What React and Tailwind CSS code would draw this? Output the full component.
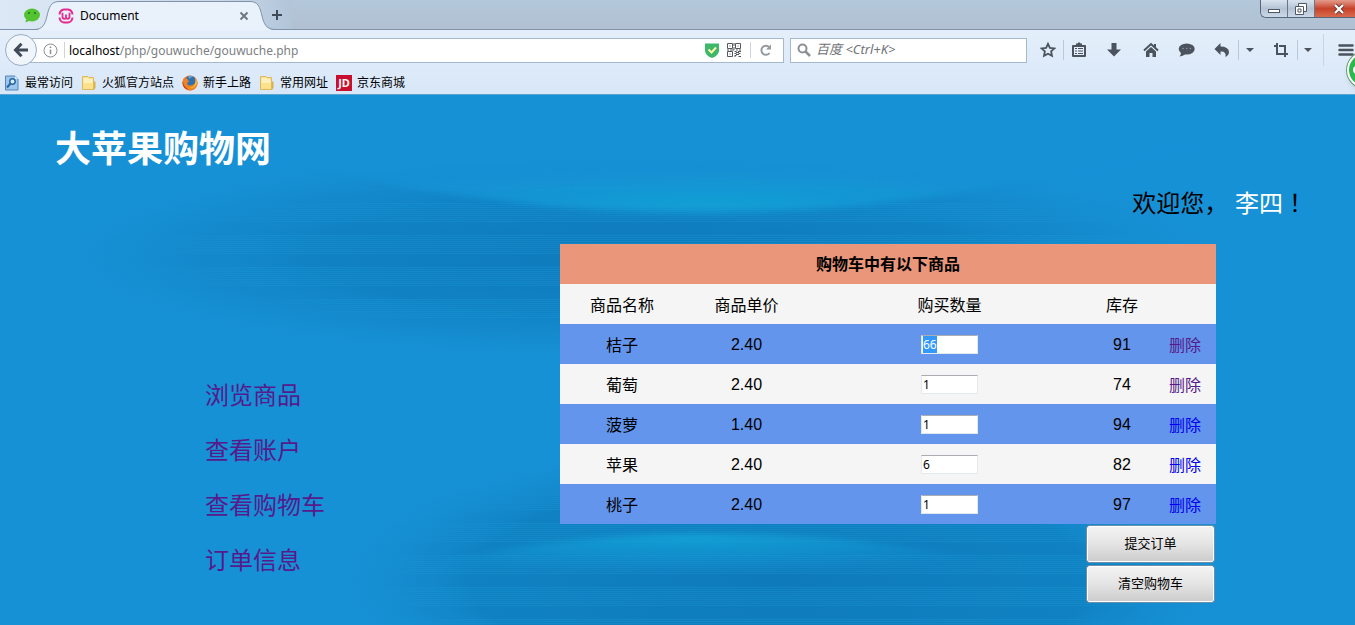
import React, { useState, useEffect, useRef } from 'react';

const initialGoods = [
    { id: 1, name: '桔子', price: '2.40', count: '66', stock: 91, visited: true },
    { id: 2, name: '葡萄', price: '2.40', count: '1', stock: 74, visited: true },
    { id: 3, name: '菠萝', price: '1.40', count: '1', stock: 94, visited: false },
    { id: 4, name: '苹果', price: '2.40', count: '6', stock: 82, visited: false },
    { id: 5, name: '桃子', price: '2.40', count: '1', stock: 97, visited: false }
];

const menu = ['浏览商品', '查看账户', '查看购物车', '订单信息'];

const Separator = () => <span className="h-5 w-px shrink-0 bg-[#b9c8da]"></span>;

const ToolButton = ({ label, className, children }) => (
    <button type="button" aria-label={label} className={`flex h-8 shrink-0 items-center justify-center text-[#4a535e] ${className}`}>
        {children}
    </button>
);

const Caret = () => (
    <svg className="h-2 w-2" viewBox="0 0 8 8" fill="currentColor">
        <path d="M0 2h8L4 6z" />
    </svg>
);

const FolderIcon = () => (
    <svg className="h-4 w-4" viewBox="0 0 16 16">
        <path d="M11 6.500h3.500v6.500l-1.500 2h-2z" fill="#d9b04c" />
        <path d="M1.500 1.500h5.500l1 1h4.500v12h-11z" fill="#fbe18c" stroke="#dcb95c" />
        <path d="M2.500 3h4.500l1 1h3.500v4h-9z" fill="#fdf0bf" />
    </svg>
);

const VisitedIcon = () => (
    <svg className="h-4 w-4" viewBox="0 0 16 16">
        <path d="M1.500 1h9.500l3 3v11h-12.500z" fill="#9cc6ec" stroke="#5586b8" />
        <path d="M11 1v3h3z" fill="#e8f3fd" />
        <circle cx="8.500" cy="6.500" r="2.700" fill="#d8ecfc" stroke="#2768a5" strokeWidth="1.500" />
        <path d="M6.500 8.500L3 12.500" stroke="#2768a5" strokeWidth="2" />
    </svg>
);

const FirefoxIcon = () => (
    <svg className="h-4 w-4" viewBox="0 0 16 16">
        <circle cx="8" cy="8" r="7.500" fill="#e2621b" />
        <circle cx="8.800" cy="6.300" r="5.300" fill="#2f6fb4" />
        <path d="M6 1.500q3-1.500 5.500.5-3 0-4 2z" fill="#59a7dc" />
        <path d="M.6 6.500Q1 3.500 2.500 2.500l.5 1.300Q4.500 3 6 4L5.500 5.200l2 .8-2.200 1.800Q5 10.500 8 10.500t5-2.500q1-3-.5-5.500 3 2 3 5.500-.5 7-7.500 7.500-7-.5-7.400-9z" fill="#ee8322" />
        <path d="M13.500 3q3 5-.5 8.500-3 2.500-6 1.500 5-.5 6-4 1-3 .5-6z" fill="#fbc33b" />
        <path d="M.8 6q.7 6 5.700 8.500-5-.5-6-6z" fill="#c23a1c" />
    </svg>
);

const JdIcon = () => (
    <span className="flex h-4 w-4 items-center justify-center bg-[#c8102e] text-[11px] leading-4 font-bold text-white">JD</span>
);

const bookmarks = [
    { text: '最常访问', icon: <VisitedIcon /> },
    { text: '火狐官方站点', icon: <FolderIcon /> },
    { text: '新手上路', icon: <FirefoxIcon /> },
    { text: '常用网址', icon: <FolderIcon /> },
    { text: '京东商城', icon: <JdIcon /> }
];

const TabStrip = () => (
    <div className="flex h-[30px] items-stretch justify-between border-b border-[#8193ab] bg-gradient-to-b from-[#b2c8da] to-[#b1c0d2]">
        <div className="flex bg-gradient-to-r from-[#dce8f5] from-0% via-[#c9d9ea] via-75% to-[#b2c5d8]">
            <button type="button" aria-label="微信" className="flex w-[46px] items-center justify-end pr-[5px]">
                <svg className="h-[18px] w-[18px]" viewBox="0 0 18 18">
                    <ellipse cx="9" cy="9" rx="8" ry="6.500" fill="#53c332" />
                    <path d="M3 13.500l-.5 3L7 14.500z" fill="#53c332" />
                    <circle cx="6" cy="7" r="1.100" fill="#237a18" />
                    <circle cx="12" cy="7" r="1.100" fill="#237a18" />
                </svg>
            </button>
            <div className="relative -mb-px flex w-[216px] items-center pt-px pl-3">
                <svg className="absolute top-0 -left-3 h-[30px] w-[242px]" viewBox="0 0 242 30" fill="none">
                    <path d="M0 30C9 30 11 24 13 16C15 7 17 1.500 25 1.500H216C224 1.500 226 7 228 16C230 24 232 30 242 30z" fill="#e9f1fb" />
                    <path d="M0 29.500C9 29.500 11 24 13 16C15 7 17 1.500 25 1.500H216C224 1.500 226 7 228 16C230 24 232 29.500 242 29.500" stroke="#8193ab" />
                </svg>
                <svg className="relative h-4 w-4" viewBox="0 0 16 16">
                    <path d="M1.500 6.500Q2 2 6 1.500H10Q14 2 14.500 6.500M1.500 9.500Q2 14 6 14.500H10Q14 14 14.500 9.500" fill="none" stroke="#e62b8f" strokeWidth="2" />
                    <path d="M4.500 4.800v4q0 2 1.800 2T8 9V6.500V9q0 1.800 1.700 1.800t1.800-2v-4" fill="none" stroke="#e62b8f" strokeWidth="1.800" />
                </svg>
                <span className="relative ml-[6px] flex-1 text-[12px] text-black">Document</span>
                <button type="button" aria-label="关闭标签页" className="relative mr-[13px] text-[#6f7780]">
                    <svg className="h-[10px] w-[10px]" viewBox="0 0 10 10" stroke="currentColor" strokeWidth="2">
                        <path d="M1.500 1.500l7 7M8.500 1.500l-7 7" />
                    </svg>
                </button>
            </div>
            <button type="button" aria-label="新标签页" className="flex w-[30px] items-center justify-center text-[#3e4a58]">
                <svg className="h-3 w-3" viewBox="0 0 12 12" stroke="currentColor" strokeWidth="2">
                    <path d="M6 1v10M1 6h10" />
                </svg>
            </button>
        </div>
        <div className="flex h-[18px] overflow-hidden rounded-bl-md border-b border-l border-[#56677d]">
            <button type="button" aria-label="最小化" className="flex w-[27px] items-center justify-center border-r border-[#66778c] bg-gradient-to-b from-[#d9e3ee] via-[#b4c3d4] to-[#cbd8e6]">
                <svg className="h-3 w-3" viewBox="0 0 12 12">
                    <rect x=".5" y="6.500" width="11" height="3" fill="#fff" stroke="#4d5866" />
                </svg>
            </button>
            <button type="button" aria-label="还原" className="flex w-[27px] items-center justify-center border-r border-[#66778c] bg-gradient-to-b from-[#d9e3ee] via-[#b4c3d4] to-[#cbd8e6]">
                <svg className="h-3 w-3" viewBox="0 0 12 12" fill="#fff" stroke="#4d5866">
                    <path d="M3.500.5h8v8h-8z" />
                    <path d="M.5 3.500h8v8h-8z" />
                    <path d="M3 6h3v3H3z" />
                </svg>
            </button>
            <button type="button" aria-label="关闭" className="flex w-[40px] items-center justify-center bg-gradient-to-b from-[#e29a8c] via-[#c7422a] to-[#d9694e] pl-2">
                <svg className="h-3 w-3" viewBox="0 0 12 12">
                    <path d="M2 2l8 8M10 2l-8 8" stroke="#6b3b36" strokeWidth="4" />
                    <path d="M2 2l8 8M10 2l-8 8" stroke="#fff" strokeWidth="2.200" />
                </svg>
            </button>
        </div>
    </div>
);

const NavBar = () => (
    <div className="flex h-10 items-center">
        <button type="button" aria-label="后退" className="z-10 ml-[5px] flex h-8 w-8 shrink-0 items-center justify-center rounded-full border border-[#9aacc2] bg-[#f0f5fc] text-[#414b57]">
            <svg className="h-4 w-4" viewBox="0 0 16 16" fill="none" stroke="currentColor" strokeWidth="3">
                <path d="M8.500 1.800L2.500 8l6 6.200M3 8h12" />
            </svg>
        </button>
        <div className="-ml-2 flex h-[25px] flex-1 items-center border border-[#a5b8ce] bg-white pl-[13px]">
            <svg className="h-[15px] w-[15px] shrink-0" viewBox="0 0 15 15" fill="none" stroke="#8b8f94">
                <circle cx="7.500" cy="7.500" r="6.500" />
                <path d="M7.500 6.500v4.500M7.500 3.500v1.500" strokeWidth="1.500" />
            </svg>
            <span className="ml-[6px] h-4 w-px bg-[#d0d4d8]"></span>
            <span className="ml-1 flex-1 pt-px text-[12px] leading-5 text-[#7c7f83]">
                <span className="text-black">localhost</span>/php/gouwuche/gouwuche.php
            </span>
            <svg className="mr-2 h-[15px] w-[14px]" viewBox="0 0 14 15">
                <path d="M0 .5h14V8q-.5 4.500-7 7Q.5 12.500 0 8z" fill="#3db76a" />
                <path d="M3.500 6.500L6.500 9.500 11 4.500" fill="none" stroke="#fff3ad" strokeWidth="2" />
            </svg>
            <svg className="h-[14px] w-[14px]" viewBox="0 0 14 14" fill="none" stroke="#54585d">
                <path d="M.5.5h5v5h-5zM8.500.5h5v5h-5zM.5 8.500h5v5h-5z" />
                <path d="M2.500 3h1M10.500 3h1M2.500 11h1M7 0v3M7 4v3H3M0 7h2M9 7h2M12 7h2" />
                <path d="M7.500 8.500h2M11 8.500h3M9 9.500h3M7.500 10.500h2M11.500 10.500h2M9 11.500h3M7.500 12.500h2M11.500 13.500h2.500M7.500 13.500h1" />
            </svg>
            <span className="mr-[9px] ml-[9px] h-4 w-px bg-[#d0d4d8]"></span>
            <button type="button" aria-label="重新加载" className="mr-[11px] text-[#959a9f]">
                <svg className="h-3 w-3" viewBox="0 0 12 12" fill="none" stroke="currentColor" strokeWidth="2">
                    <path d="M9.500 9A4.500 4.500 0 1 1 9.200 3.200" />
                    <path d="M11 .5v5H6z" fill="currentColor" stroke="none" />
                </svg>
            </button>
        </div>
        <label className="ml-[6px] flex h-[25px] w-[237px] shrink-0 items-center border border-[#a5b8ce] bg-white pl-[6px]">
            <svg className="h-[14px] w-[14px] shrink-0" viewBox="0 0 14 14" fill="none" stroke="#8c9095">
                <circle cx="5.500" cy="5.500" r="4" strokeWidth="2" />
                <path d="M8.500 8.500l4.500 4.500" strokeWidth="2.500" />
            </svg>
            <input
                type="text"
                aria-label="搜索"
                placeholder="百度 <Ctrl+K>"
                className="ml-[5px] w-full min-w-0 text-[13px] italic outline-none placeholder:text-[#6f7276]"
            />
        </label>
        <ToolButton label="收藏" className="ml-[6px] w-[30px]">
            <svg className="h-4 w-4" viewBox="0 0 16 16" fill="none" stroke="currentColor" strokeWidth="1.800">
                <path d="M8 1.800l1.900 4.100 4.500.5-3.300 3 .9 4.500L8 11.700l-4 2.200.9-4.500-3.300-3 4.500-.5z" />
            </svg>
        </ToolButton>
        <Separator />
        <ToolButton label="书签" className="w-[30px]">
            <svg className="h-4 w-4" viewBox="0 0 16 16">
                <path d="M5 1.500h1.500L7.200.5h1.600l.7 1H11V3h3q1 0 1 1v10q0 1-1 1H2q-1 0-1-1V4q0-1 1-1h3z" fill="#4a535e" />
                <path d="M3 5h10v8H3z" fill="#e6eefa" />
                <path d="M4 6.500h2M7 6.500h5M4 9h2M7 9h5M4 11.500h2M7 11.500h5" stroke="#4a535e" />
            </svg>
        </ToolButton>
        <ToolButton label="下载" className="w-[40px]">
            <svg className="h-4 w-4" viewBox="0 0 16 16" fill="currentColor">
                <path d="M5.500 1h5v6.500H15l-7 7-7-7h4.500z" />
            </svg>
        </ToolButton>
        <ToolButton label="主页" className="w-[34px]">
            <svg className="h-4 w-4" viewBox="0 0 16 16">
                <path d="M1 8.500L8 2l7 6.500M12 2v3" fill="none" stroke="currentColor" strokeWidth="2" />
                <path d="M8 5l5 4.500V15H9.500v-4h-3v4H3V9.500z" fill="currentColor" />
            </svg>
        </ToolButton>
        <ToolButton label="聊天" className="w-[37px]">
            <svg className="h-4 w-[17px]" viewBox="0 0 17 16" fill="currentColor">
                <ellipse cx="8.700" cy="7" rx="8" ry="5.500" />
                <path d="M3 10q0 3-1.500 4.500Q5 14 7.500 12z" />
                <g fill="#8e9aa8">
                    <circle cx="5" cy="6.500" r=".8" />
                    <circle cx="8.700" cy="6.500" r=".8" />
                    <circle cx="12.400" cy="6.500" r=".8" />
                </g>
            </svg>
        </ToolButton>
        <ToolButton label="撤销" className="w-[33px]">
            <svg className="h-4 w-4" viewBox="0 0 16 16" fill="currentColor">
                <path d="M6.500 1v3.500Q14.500 4.500 15 10q0 3-3.500 5 1-6-5-5.500V13L.5 7z" />
            </svg>
        </ToolButton>
        <Separator />
        <ToolButton label="撤销菜单" className="w-[22px]">
            <Caret />
        </ToolButton>
        <ToolButton label="截图" className="w-[36px] pl-1">
            <svg className="h-4 w-4" viewBox="0 0 16 16" fill="none" stroke="currentColor" strokeWidth="2">
                <path d="M4 1v11h7M1 4h2M6 4h6v11M13 12h2" />
            </svg>
        </ToolButton>
        <Separator />
        <ToolButton label="截图菜单" className="w-[20px]">
            <Caret />
        </ToolButton>
        <span className="ml-[5px] h-8 w-px shrink-0 bg-[#c7d5e6]"></span>
        <ToolButton label="打开菜单" className="w-[31px] pl-3">
            <svg className="h-3 w-4 shrink-0" viewBox="0 0 16 12" fill="none" stroke="currentColor" strokeWidth="2.500" strokeLinecap="round">
                <path d="M1.500 1.500h13M1.500 6h13M1.500 10.500h13" />
            </svg>
        </ToolButton>
    </div>
);

// deep blue haze with two bright arcs and bands of fine scan lines
const Backdrop = () => (
    <svg className="absolute inset-0 h-full w-full" viewBox="0 0 1355 530" preserveAspectRatio="none" aria-hidden="true">
        <defs>
            <radialGradient id="haze">
                <stop offset="0" stopColor="#0e79bb" />
                <stop offset=".5" stopColor="#0f7fc0" stopOpacity=".85" />
                <stop offset=".75" stopColor="#1286c8" stopOpacity=".5" />
                <stop offset="1" stopColor="#1791d6" stopOpacity="0" />
            </radialGradient>
            <radialGradient id="deepHaze">
                <stop offset="0" stopColor="#0e7abb" />
                <stop offset=".65" stopColor="#0f80c0" stopOpacity=".9" />
                <stop offset="1" stopColor="#1791d6" stopOpacity="0" />
            </radialGradient>
            <radialGradient id="glow">
                <stop offset="0" stopColor="#119fd4" />
                <stop offset=".5" stopColor="#139ad4" stopOpacity=".6" />
                <stop offset="1" stopColor="#1791d6" stopOpacity="0" />
            </radialGradient>
            <radialGradient id="fade">
                <stop offset="0" stopColor="#fff" />
                <stop offset=".75" stopColor="#fff" stopOpacity=".9" />
                <stop offset="1" stopColor="#fff" stopOpacity="0" />
            </radialGradient>
            <pattern id="lines" width="1355" height="32" patternUnits="userSpaceOnUse">
                <path d="M0 12.500h1355M0 14.500h1355M0 16.500h1355M0 18.500h1355M0 20.500h1355M0 22.500h1355M0 24.500h1355M0 26.500h1355M0 28.500h1355M0 30.500h1355" stroke="#1d9cd8" />
            </pattern>
            <filter id="soft">
                <feGaussianBlur stdDeviation="3" />
            </filter>
            <mask id="spots">
                <ellipse cx="660" cy="160" rx="560" ry="90" fill="url(#fade)" />
                <ellipse cx="760" cy="485" rx="430" ry="120" fill="url(#fade)" />
            </mask>
            <mask id="bowl">
                <path d="M200 40Q700 196 1200 40V-10H200z" fill="#fff" filter="url(#soft)" />
            </mask>
            <mask id="hill">
                <path d="M330 500Q680 376 1140 500Q680 460 330 500z" fill="#fff" filter="url(#soft)" />
            </mask>
        </defs>
        <ellipse cx="640" cy="160" rx="640" ry="115" fill="url(#haze)" />
        <ellipse cx="780" cy="485" rx="480" ry="150" fill="url(#deepHaze)" />
        <g mask="url(#bowl)">
            <rect x="200" width="1000" height="130" fill="#1791d6" fillOpacity=".7" />
            <ellipse cx="710" cy="108" rx="400" ry="38" fill="url(#glow)" />
        </g>
        <g mask="url(#hill)">
            <ellipse cx="690" cy="442" rx="380" ry="36" fill="url(#glow)" />
        </g>
        <rect width="1355" height="530" fill="url(#lines)" fillOpacity=".35" mask="url(#spots)" />
    </svg>
);

const CartTable = ({ goods, onCountChange, onRemove }) => {
    const firstInput = useRef(null);

    useEffect(() => {
        if (firstInput.current) {
            firstInput.current.focus();
            firstInput.current.select();
        }
    }, []);

    return (
        <table className="w-full table-fixed border-collapse text-center text-[16px] text-black">
            <colgroup>
                <col className="w-[124px]" />
                <col className="w-[125px]" />
                <col />
                <col className="w-[64px]" />
                <col className="w-[62px]" />
            </colgroup>
            <thead>
                <tr className="h-10 bg-[#e9967a]">
                    <th colSpan={5} className="pt-[2px] font-bold">购物车中有以下商品</th>
                </tr>
                <tr className="h-10 bg-[#f5f5f5]">
                    <th className="pt-1 font-normal">商品名称</th>
                    <th className="pt-1 font-normal">商品单价</th>
                    <th className="pt-1 font-normal">购买数量</th>
                    <th className="pt-1 font-normal">库存</th>
                    <td></td>
                </tr>
            </thead>
            <tbody>
                {goods.map((item, index) => (
                    <tr key={item.id} className="h-10 odd:bg-[#6495ed] even:bg-[#f5f5f5]">
                        <td className="pt-1">{item.name}</td>
                        <td className="pt-[2px]">{item.price}</td>
                        <td>
                            <input
                                ref={index === 0 ? firstInput : null}
                                type="text"
                                aria-label={`${item.name}购买数量`}
                                value={item.count}
                                onChange={(e) => onCountChange(item.id, e.target.value)}
                                className="mx-auto block h-[19px] w-[57px] border border-[#e3e9ef] border-t-[#abadb3] bg-white pl-px font-['Noto_Sans'] text-[12px] leading-4 outline-none selection:bg-[#3399ff] selection:text-white"
                            />
                        </td>
                        <td className="pt-[2px]">{item.stock}</td>
                        <td className="pt-1">
                            <a
                                href="#"
                                onClick={(e) => { e.preventDefault(); onRemove(item.id); }}
                                className={item.visited ? 'text-[#551a8b]' : 'text-[#0000ee]'}
                            >
                                删除
                            </a>
                        </td>
                    </tr>
                ))}
            </tbody>
        </table>
    );
};

const cartButton = "h-9 w-[127px] rounded-xs border border-white bg-gradient-to-b from-[#f3f3f3] from-0% via-[#e4e4e4] via-50% to-[#cdcdcd] text-[13px] text-black outline outline-[#6c8ea6]";

const App = () => {
    const [goods, setGoods] = useState(initialGoods);

    const changeCount = (id, count) => {
        setGoods(goods.map((item) => (item.id === id ? { ...item, count } : item)));
    };

    const removeItem = (id) => {
        setGoods(goods.filter((item) => item.id !== id));
    };

    return (
        <div className="relative flex min-h-screen flex-col overflow-hidden font-['Liberation_Sans','Noto_Sans_CJK_SC',sans-serif]">
            <header className="border-b border-[#5aa5cf] bg-gradient-to-b from-[#eaf2fc] to-[#d8e7f8] font-['Noto_Sans','Noto_Sans_CJK_SC',sans-serif]">
                <TabStrip />
                <NavBar />
                <nav className="flex h-6 items-center gap-2 pt-px pl-1">
                    {bookmarks.map((mark) => (
                        <a key={mark.text} href="#" className="flex items-center gap-[5px] text-[12px] leading-4 whitespace-nowrap text-black">
                            {mark.icon}
                            {mark.text}
                        </a>
                    ))}
                </nav>
            </header>
            <button type="button" aria-label="加速球" className="absolute top-[52px] -right-[28px] z-10 h-9 w-9 rounded-full border-2 border-white bg-[#2db84d] shadow-md ring-1 ring-[#5f9a6b]">
                <span className="ml-1 block h-2 w-2 rounded-full bg-white"></span>
            </button>

            <main className="relative flex-1 bg-[#1791d6]">
                <Backdrop />
                <div className="relative">
                    <h1 className="pt-[30px] pl-[55px] text-[36px] leading-[50px] font-bold text-white">大苹果购物网</h1>
                    <p className="mt-[9px] pr-12 text-right text-[24px] leading-9 text-black">
                        欢迎您， <a href="#" className="text-white">李四</a>
                        <span className="font-['Noto_Sans_CJK_TC']" lang="zh-TW">！</span>
                    </p>
                    <div className="mt-[22px] flex items-start justify-between pr-[139px] pl-[205px]">
                        <ul className="mt-[134px] flex flex-col gap-[19px] text-[24px] leading-9 whitespace-nowrap">
                            {menu.map((text) => (
                                <li key={text}>
                                    <a href="#" className="text-[#551a8b]">{text}</a>
                                </li>
                            ))}
                        </ul>
                        <div className="w-[656px]">
                            <CartTable goods={goods} onCountChange={changeCount} onRemove={removeItem} />
                            <div className="flex flex-col items-end gap-1 pt-[2px] pr-[2px]">
                                <button type="button" className={cartButton}>提交订单</button>
                                <button type="button" className={cartButton} onClick={() => setGoods([])}>清空购物车</button>
                            </div>
                        </div>
                    </div>
                </div>
            </main>
        </div>
    );
};

export default App;
